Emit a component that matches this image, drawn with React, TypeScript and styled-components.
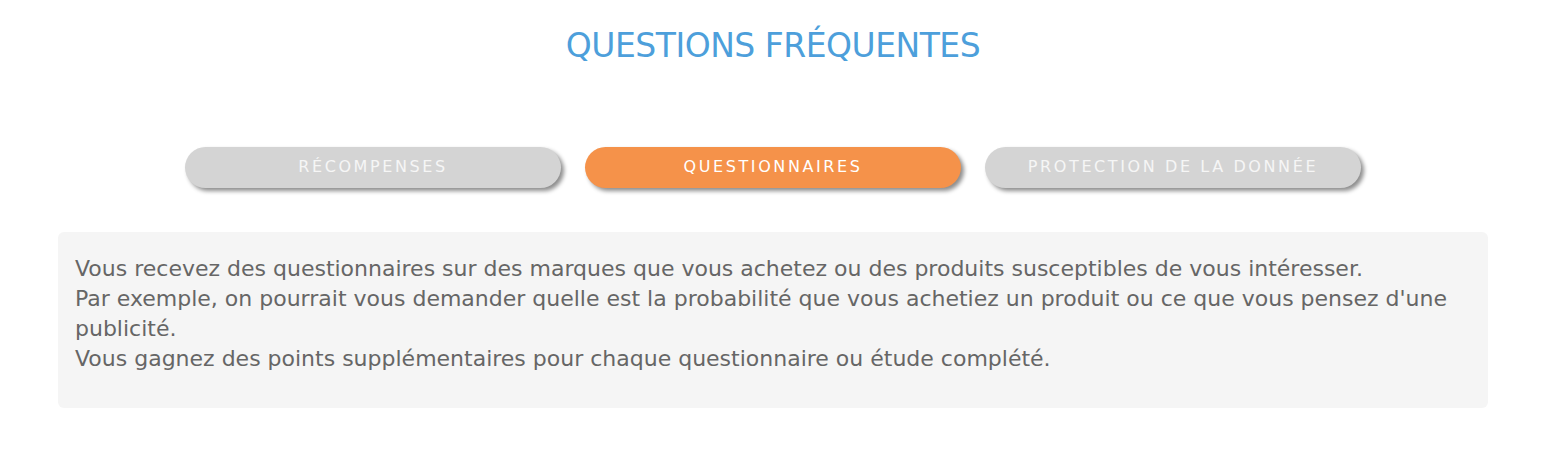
import React, { useState } from 'react';
import styled, { createGlobalStyle } from 'styled-components';

interface Topic {
  label: string;
  paragraphs: string[];
}

const topics: Topic[] = [
  {
    label: 'Récompenses',
    paragraphs: ['Vous gagnez des points pour chaque questionnaire complété, que vous pouvez échanger contre des récompenses.'],
  },
  {
    label: 'Questionnaires',
    paragraphs: [
      'Vous recevez des questionnaires sur des marques que vous achetez ou des produits susceptibles de vous intéresser.',
      "Par exemple, on pourrait vous demander quelle est la probabilité que vous achetiez un produit ou ce que vous pensez d'une publicité.",
      'Vous gagnez des points supplémentaires pour chaque questionnaire ou étude complété.',
    ],
  },
  {
    label: 'Protection de la donnée',
    paragraphs: ['Vos données personnelles sont protégées et ne sont jamais vendues à des tiers.'],
  },
];

const GlobalStyle = createGlobalStyle`
  html, body {
    margin: 0;
    padding: 0;
    background: #fff;
  }
`;

const App = () => {
  const [active, setActive] = useState(1);

  return (
    <Page>
      <GlobalStyle />
      <Title>Questions fréquentes</Title>
      <Tabs>
        {topics.map((topic, index) => (
          <Tab key={topic.label} $active={index === active} onClick={() => setActive(index)}>
            {topic.label}
          </Tab>
        ))}
      </Tabs>
      <Answer>
        {topics[active].paragraphs.map(text => (
          <p key={text}>{text}</p>
        ))}
      </Answer>
    </Page>
  );
};

export default App;

const Page = styled.div`
  width: 1550px;
  height: 460px;
  box-sizing: border-box;
  padding: 26px 62px 0 58px;
  font-family: 'DejaVu Sans', 'Liberation Sans', sans-serif;
`;

const Title = styled.h1`
  margin: 0;
  text-align: center;
  text-transform: uppercase;
  color: #4d9fdb;
  font-size: 33px;
  font-weight: normal;
  letter-spacing: -0.5px;
  line-height: 40px;
`;

const Tabs = styled.div`
  display: flex;
  justify-content: center;
  gap: 24px;
  margin-top: 81px;
`;

const Tab = styled.button<{ $active: boolean }>`
  width: 376px;
  height: 41px;
  border: none;
  border-radius: 21px;
  background: ${p => (p.$active ? '#f5924a' : '#d4d4d4')};
  box-shadow: 3px 3px 4px rgba(0, 0, 0, 0.45);
  color: ${p => (p.$active ? '#fff' : '#f6f6f6')};
  font-family: inherit;
  font-size: 16px;
  letter-spacing: 2.6px;
  text-transform: uppercase;
  cursor: pointer;
  padding: 0 0 3px;
`;

const Answer = styled.div`
  margin-top: 44px;
  height: 176px;
  box-sizing: border-box;
  padding: 22px 17px;
  background: #f5f5f5;
  border-radius: 6px;
  color: #666;
  font-size: 22px;
  line-height: 30px;

  & > p {
    margin: 0;
  }
`;
